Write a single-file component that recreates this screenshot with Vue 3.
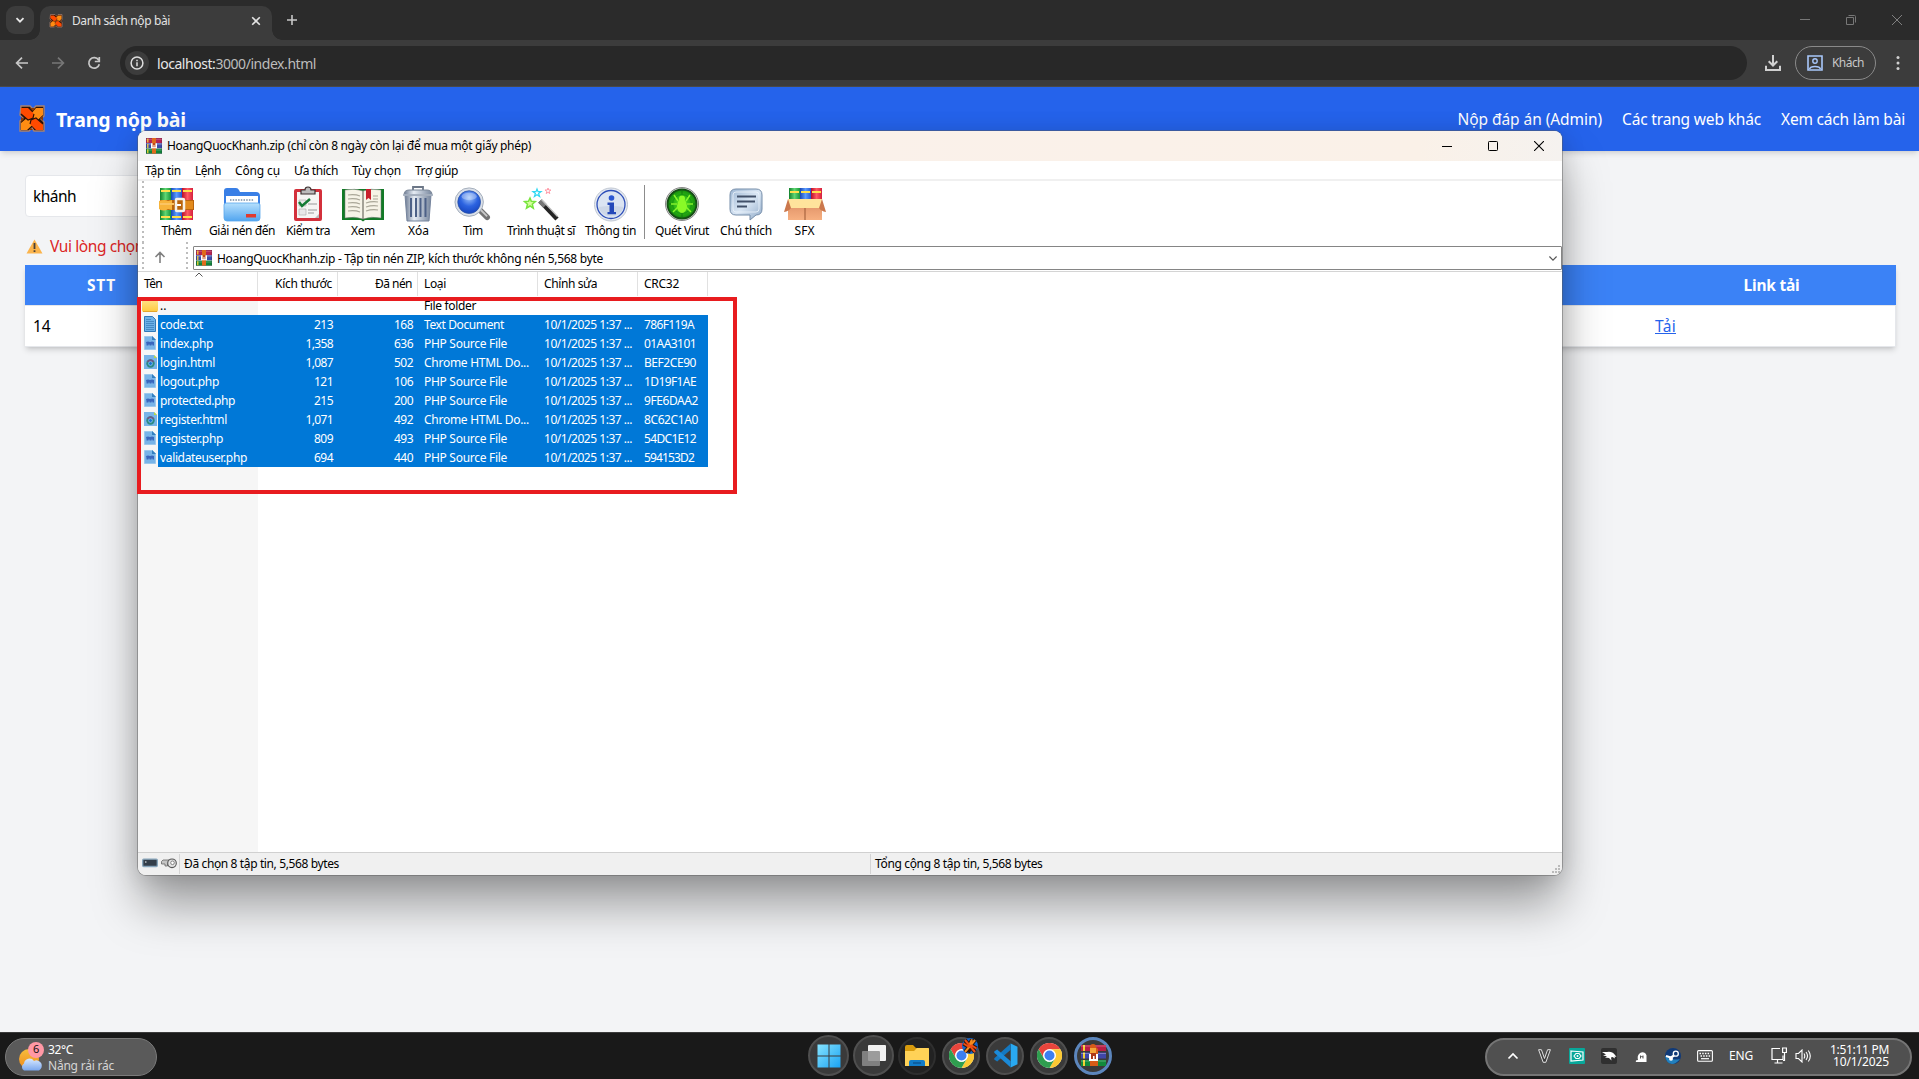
<script setup>
// Adjusts tracking so that a label occupies the given width in pixels.
const vFit = {
  mounted(el, { value }) {
    if (!value) return
    const natural = el.getBoundingClientRect().width
    el.style.letterSpacing = `${(value - natural) / [...el.textContent].length}px`
  }
}

const links = [
  { label: 'Nộp đáp án (Admin)', w: 144.5 },
  { label: 'Các trang web khác', w: 139 },
  { label: 'Xem cách làm bài', w: 124 }
]

const menus = [
  { label: 'Tập tin', w: 36 },
  { label: 'Lệnh', w: 26 },
  { label: 'Công cụ', w: 45 },
  { label: 'Ưa thích', w: 44 },
  { label: 'Tùy chọn', w: 49 },
  { label: 'Trợ giúp', w: 43 }
]

const tools = [
  { icon: 'add', label: 'Thêm', w: 30 },
  { icon: 'extract', label: 'Giải nén đến', w: 66 },
  { icon: 'test', label: 'Kiểm tra', w: 44 },
  { icon: 'view', label: 'Xem', w: 24 },
  { icon: 'delete', label: 'Xóa', w: 21 },
  { icon: 'find', label: 'Tìm', w: 20 },
  { icon: 'wizard', label: 'Trình thuật sĩ', w: 68 },
  { icon: 'info', label: 'Thông tin', w: 51 },
  { icon: 'sep' },
  { icon: 'virus', label: 'Quét Virut', w: 54 },
  { icon: 'comment', label: 'Chú thích', w: 52 },
  { icon: 'sfx', label: 'SFX', w: 20 }
]

const date = '10/1/2025 1:37 ...'
const files = [
  { name: 'code.txt', nw: 43, size: '213', packed: '168', type: 'Text Document', tw: 80, crc: '786F119A', cw: 50, icon: 'txt' },
  { name: 'index.php', nw: 53, size: '1,358', packed: '636', type: 'PHP Source File', tw: 83, crc: '01AA3101', cw: 52, icon: 'php' },
  { name: 'login.html', nw: 55, size: '1,087', packed: '502', type: 'Chrome HTML Do...', tw: 105, crc: 'BEF2CE90', cw: 52, icon: 'html' },
  { name: 'logout.php', nw: 59, size: '121', packed: '106', type: 'PHP Source File', tw: 83, crc: '1D19F1AE', cw: 52, icon: 'php' },
  { name: 'protected.php', nw: 75, size: '215', packed: '200', type: 'PHP Source File', tw: 83, crc: '9FE6DAA2', cw: 54, icon: 'php' },
  { name: 'register.html', nw: 67, size: '1,071', packed: '492', type: 'Chrome HTML Do...', tw: 105, crc: '8C62C1A0', cw: 54, icon: 'html' },
  { name: 'register.php', nw: 63, size: '809', packed: '493', type: 'PHP Source File', tw: 83, crc: '54DC1E12', cw: 52, icon: 'php' },
  { name: 'validateuser.php', nw: 87, size: '694', packed: '440', type: 'PHP Source File', tw: 83, crc: '594153D2', cw: 50, icon: 'php' }
]
const numberWidth = (s) => (s.length > 3 ? 27.5 : 19)
</script>

<template>
  <svg class="defs" aria-hidden="true">
    <defs>
      <linearGradient id="gRed" x1="0" x2="1"><stop offset="0" stop-color="#b80d28" /><stop offset=".5" stop-color="#ff5a63" /><stop offset="1" stop-color="#d5203c" /></linearGradient>
      <linearGradient id="gBlue" x1="0" x2="1"><stop offset="0" stop-color="#1746b4" /><stop offset=".5" stop-color="#5b9bff" /><stop offset="1" stop-color="#2457cf" /></linearGradient>
      <linearGradient id="gGreen" x1="0" x2="1"><stop offset="0" stop-color="#12812c" /><stop offset=".5" stop-color="#5fd673" /><stop offset="1" stop-color="#17963a" /></linearGradient>
      <linearGradient id="gFolder" x1="0" y1="0" x2="0" y2="1"><stop offset="0" stop-color="#b6e0fd" /><stop offset="1" stop-color="#52a5ef" /></linearGradient>
      <linearGradient id="gMetal" x1="0" x2="1"><stop offset="0" stop-color="#6c7a92" /><stop offset=".35" stop-color="#e6ecf4" /><stop offset="1" stop-color="#77869d" /></linearGradient>
      <radialGradient id="gLens" cx=".5" cy=".3" r=".7"><stop offset="0" stop-color="#9fc5fb" /><stop offset=".55" stop-color="#2c63e0" /><stop offset="1" stop-color="#1746c0" /></radialGradient>
      <radialGradient id="gVirus"><stop offset="0" stop-color="#58f025" /><stop offset="1" stop-color="#118b0b" /></radialGradient>
      <linearGradient id="gChat" x1="0" y1="0" x2="1" y2="1"><stop offset="0" stop-color="#9fb8d4" /><stop offset=".5" stop-color="#d9e6f4" /><stop offset="1" stop-color="#8fa9c7" /></linearGradient>
      <linearGradient id="gBox" x1="0" y1="0" x2="0" y2="1"><stop offset="0" stop-color="#d98a60" /><stop offset="1" stop-color="#f7b081" /></linearGradient>
      <linearGradient id="gYellow" x1="0" y1="0" x2="0" y2="1"><stop offset="0" stop-color="#ffe694" /><stop offset="1" stop-color="#ffc93c" /></linearGradient>
      <linearGradient id="gWin" x1="0" y1="0" x2="1" y2="1"><stop offset="0" stop-color="#86e4ff" /><stop offset="1" stop-color="#1aa2f2" /></linearGradient>
      <linearGradient id="gCloud" x1="0" y1="0" x2="0" y2="1"><stop offset="0" stop-color="#d8e9ff" /><stop offset="1" stop-color="#7aa7ee" /></linearGradient>
      <linearGradient id="gSun" x1="0" y1="0" x2="0" y2="1"><stop offset="0" stop-color="#f7bd3c" /><stop offset="1" stop-color="#f08b1d" /></linearGradient>
    </defs>
    <symbol id="knot" viewBox="0 0 28 28">
      <path d="M3 1h9l3 3 3-3h8v10l-3 3 3 3v9H16l-2-3-3 3H2V16l3-3-3-3z" fill="#2a1208" stroke="#a98272" stroke-width="1.400" />
      <path d="M18 3h7v7L9 25H3v-7l6-5 4-4z" fill="#ff8c12" />
      <path d="M3 3h7l6 6-1 4-5 2-7-6z" fill="#ff4a00" />
      <path d="M13 15l5-2 7 6v6h-7l-6-6z" fill="#ff4a00" />
      <path d="M3 9l7 6 5-2 1-4M12 19l1-4 5-2 7 6" fill="none" stroke="#2a1208" stroke-width="1.100" />
      <path d="M12 3l3 3 2-3zM3 12l3 2-3 3zM25 11v5l-3-3zM11 25h4l-2-2z" fill="#8a3808" />
    </symbol>
    <symbol id="rar" viewBox="0 0 16 16">
      <path d="M0 0h16v5H0z" fill="#b52452" /><path d="M0 5.300h16v5H0z" fill="#3b4aa8" /><path d="M0 10.600h16v5H0z" fill="#0f8438" />
      <path d="M0 1.200h16M1 6.600h15M1 12h15" stroke="#fff" stroke-opacity=".25" />
      <path d="M1.800 .500v4M1.800 6v4M1.800 11.300v4" stroke="#ffd735" stroke-width="1.200" />
      <path d="M0 0h16v15.600H0z" fill="none" stroke="#261b3a" stroke-opacity=".55" stroke-width=".6" />
      <path d="M6 0h4v15.600H6z" fill="#e06b1c" /><path d="M5 5.300h6v5H5z" fill="#fff" /><path d="M6.600 5h2.800v4.200H6.600z" fill="#c44b16" /><path d="M7.500 7h1v3h-1z" fill="#f5f5f5" />
    </symbol>
    <symbol id="chrome" viewBox="0 0 24 24">
      <circle cx="12" cy="12" r="12" fill="#fff" />
      <path d="M1.600 6A12 12 0 0 1 22.400 6H12a6 6 0 0 0-5.200 9z" fill="#e8453c" />
      <path d="M22.400 6A12 12 0 0 1 12 24l5.200-9A6 6 0 0 0 12 6z" fill="#fcc934" />
      <path d="M12 24A12 12 0 0 1 1.600 6l5.200 9a6 6 0 0 0 10.400 0z" fill="#2f9e4f" />
      <circle cx="12" cy="12" r="6" fill="#fff" /><circle cx="12" cy="12" r="4.800" fill="#3d7ff0" />
    </symbol>
  </svg>

  <div class="screen">
    <div class="tabstrip">
      <div class="tabsearch">
        <svg width="10" height="10" viewBox="0 0 10 10"><path d="M1.500 3.200 5 6.700l3.500-3.500" fill="none" stroke="#e8e8e8" stroke-width="1.800" /></svg>
      </div>
      <div class="tab">
        <svg width="14" height="14"><use href="#knot" /></svg>
        <span class="tabtitle"><span v-fit="98" class="t">Danh sách nộp bài</span></span>
        <svg width="10" height="10" viewBox="0 0 10 10"><path d="M1.200 1.200l7.600 7.600M8.800 1.200 1.200 8.800" stroke="#e3e3e3" stroke-width="1.600" /></svg>
      </div>
      <svg class="plus" width="12" height="12" viewBox="0 0 12 12"><path d="M6 1v10M1 6h10" stroke="#c7c7c7" stroke-width="1.600" /></svg>
      <div class="caption dim">
        <svg width="10" height="10" viewBox="0 0 10 10"><path d="M0 4.500h10" stroke="#777" /></svg>
        <svg width="10" height="10" viewBox="0 0 10 10"><path d="M.5 2.500h7v7h-7zM2.500 .500h6a1 1 0 0 1 1 1v6" fill="none" stroke="#777" /></svg>
        <svg width="10" height="10" viewBox="0 0 10 10"><path d="M0 0l10 10M10 0 0 10" stroke="#808080" /></svg>
      </div>
    </div>

    <div class="toolbar">
      <svg class="navico" width="14" height="14" viewBox="0 0 14 14"><path d="M13 7H2M7 1.600 1.600 7 7 12.400" fill="none" stroke="#c7c7c7" stroke-width="1.700" /></svg>
      <svg class="navico" width="14" height="14" viewBox="0 0 14 14"><path d="M1 7h11M7 1.600 12.400 7 7 12.400" fill="none" stroke="#777" stroke-width="1.700" /></svg>
      <svg class="navico" width="14" height="14" viewBox="0 0 14 14"><path d="M11.600 4A5.300 5.300 0 1 0 12.300 8.200M12.300 1v4.500H7.800" fill="none" stroke="#c7c7c7" stroke-width="1.700" /></svg>
      <div class="address">
        <div class="siteinfo"><svg width="14" height="14" viewBox="0 0 14 14"><circle cx="7" cy="7" r="5.900" fill="none" stroke="#dedede" stroke-width="1.500" /><path d="M7 6.200v4M7 3.700v1.500" stroke="#dedede" stroke-width="1.500" /></svg></div>
        <span v-fit="159" class="t url">localhost:<i>3000/index.html</i></span>
      </div>
      <svg class="download" width="16" height="16" viewBox="0 0 16 16"><path d="M8 0v10M3.700 6.200 8 10.500l4.300-4.300M1 10.800V15h14v-4.200" fill="none" stroke="#d0d0d0" stroke-width="2" /></svg>
      <div class="guest">
        <svg width="16" height="16" viewBox="0 0 16 16"><path d="M1 1h14v14H1z" fill="none" stroke="#a8c7fa" stroke-width="1.600" /><circle cx="8" cy="6" r="2.200" fill="none" stroke="#a8c7fa" stroke-width="1.400" /><path d="M2.500 14c1-3.500 10-3.500 11 0" fill="none" stroke="#a8c7fa" stroke-width="1.500" /></svg>
        <span v-fit="32" class="t">Khách</span>
      </div>
      <svg class="dots" width="4" height="14" viewBox="0 0 4 14"><g fill="#d0d0d0"><circle cx="2" cy="1.600" r="1.500" /><circle cx="2" cy="7" r="1.500" /><circle cx="2" cy="12.400" r="1.500" /></g></svg>
    </div>

    <header class="site">
      <svg width="28" height="28"><use href="#knot" /></svg>
      <h1><span v-fit="130" class="t">Trang nộp bài</span></h1>
      <nav><a v-for="l in links" :key="l.label"><span v-fit="l.w" class="t">{{ l.label }}</span></a></nav>
    </header>

    <main class="content">
      <div class="field"><span v-fit="43" class="t">khánh</span></div>
      <div class="warn">
        <svg width="17" height="15" viewBox="0 0 17 15"><path d="M8.500 .500 16.500 14.500H.5z" fill="#fbb44c" /><path d="M7.600 4h1.800v6H7.600zM7.600 11.300h1.800v1.700H7.600z" fill="#4a4038" /></svg>
        <span v-fit="94" class="t">Vui lòng chọn</span>
      </div>
      <div class="table">
        <div class="thead"><div class="c1"><span v-fit="29" class="t">STT</span></div><div class="c2"></div><div class="c3"><span v-fit="56" class="t">Link tải</span></div></div>
        <div class="trow"><div class="c1"><span class="t">14</span></div><div class="c2"></div><div class="c3"><a v-fit="21" class="t">Tải</a></div></div>
      </div>
    </main>

    <footer class="taskbar">
      <div class="weather">
        <svg width="26" height="30" viewBox="0 0 26 30"><circle cx="11" cy="17" r="10" fill="url(#gSun)" /><path d="M6 28.500a4 4 0 0 1 0-7 5.500 5.500 0 0 1 10-2.500 4.800 4.800 0 0 1 5 9.500z" fill="url(#gCloud)" /><circle cx="18" cy="8" r="8" fill="#ff98a5" /></svg>
        <span class="badge">6</span>
        <div class="wtext"><span v-fit="25" class="t">32°C</span><span v-fit="66" class="t desc">Nắng rải rác</span></div>
      </div>

      <div class="apps">
        <div class="app big"><svg width="24" height="24" viewBox="0 0 24 24"><path d="M.500 .500h11v11h-11zM12.500 .500h11v11h-11zM.500 12.500h11v11h-11zM12.500 12.500h11v11h-11z" fill="url(#gWin)" /></svg></div>
        <div class="app big"><svg width="26" height="22" viewBox="0 0 26 22"><rect x="7" y="0" width="18" height="16" rx="1" fill="#f1f1f1" /><rect x="1" y="6" width="18" height="15" rx="1" fill="#8d8d8d" fill-opacity=".85" /></svg></div>
        <div class="app faint"><svg width="26" height="24" viewBox="0 0 26 24"><path d="M1 3q0-2 2-2h6l3 3h12q1 0 1 1v6H1z" fill="#d89b0d" /><path d="M1 7h9l3-3h11q1 0 1 1v17H1z" fill="#ffd257" /><path d="M5 22v-4q0-2 2-2h12q2 0 2 2v4z" fill="#127cc8" /><path d="M9 19h8" stroke="#0b4f8a" stroke-width="1.300" /></svg></div>
        <div class="app"><svg width="25" height="25"><use href="#chrome" /></svg><svg class="mark" width="16" height="16" viewBox="0 0 16 16"><circle cx="8" cy="8" r="8" fill="#1565c9" /><path d="M3 2l10 12M1.500 5.500 7 9M14.500 10.500 9 7" stroke="#32170c" stroke-width="4" /><path d="M13 2 3 14M10 1.500 7 8M6 14.500 9 8" stroke="#32170c" stroke-width="4" /><path d="M13 2 3 14M10 1.500 7 8" stroke="#f38a20" stroke-width="2" /><path d="M3 2l10 12M1.500 5.500 7 9M14.500 10.500 9 7" stroke="#f04c12" stroke-width="2" /></svg></div>
        <div class="app"><svg width="25" height="25" viewBox="0 0 24 24"><path d="M17 .500 23.500 3.500v17L17 23.500z" fill="#29a9f1" /><path d="M17 .500v6L4 17.700 1.500 16q-1-.8 0-1.700z" fill="#1478c0" /><path d="M17 23.500v-6L4 6.300 1.500 8q-1 .8 0 1.700z" fill="#1b8ad8" /></svg></div>
        <div class="app"><svg width="25" height="25"><use href="#chrome" /></svg></div>
        <div class="app active"><svg width="25" height="23" viewBox="0 0 25 23"><path d="M0 1h25v6H0z" fill="#b91e45" /><path d="M0 8.500h25v6H0z" fill="#4046a8" /><path d="M0 16h25v6H0z" fill="#128a3b" /><path d="M3 1v6M3 8.500v6M3 16v6" stroke="#f4cf33" stroke-width="2" /><path d="M0 2h25M0 9.500h25M0 17h25" stroke="#fff" stroke-opacity=".3" /><path d="M9 3q0-3 3-3t3 3l2 2v17H9z" fill="#d75c17" /><path d="M9 4h6v5H9z" fill="#f4a53a" /><path d="M8 10h9v7H8z" fill="#fff" /><path d="M10 9h5v6h-5z" fill="#ad3817" /><path d="M12 12h1.500v4H12z" fill="#fff" /></svg></div>
      </div>

      <div class="tray">
        <svg width="12" height="8" viewBox="0 0 12 8"><path d="M1.500 6.500 6 2l4.500 4.500" fill="none" stroke="#fff" stroke-width="1.700" /></svg>
        <svg width="13" height="14" viewBox="0 0 13 14"><path d="M.6.700h2.800L6.500 9.500 9.600.700h2.800L7.800 13.300H5.200z" fill="#3d3d3d" stroke="#e2e2e2" stroke-width="1" /></svg>
        <svg width="16" height="16" viewBox="0 0 16 16"><rect width="16" height="16" rx="1" fill="#08a79a" /><path d="M2 3l12 1v8L2 13z" fill="none" stroke="#fff" stroke-width="1.200" /><path d="M5 8l2-2.500h3L12 8l-2 2.500H7z" fill="none" stroke="#fff" stroke-width="1.200" /><circle cx="8.500" cy="8" r="1" fill="#fff" /></svg>
        <svg width="16" height="16" viewBox="0 0 16 16"><rect width="16" height="16" rx="2" fill="#303030" /><path d="M1 4h5q5-1 8 3l1.500 2-2-.5.500 2-2.500-1.500-1.500.5.500 3L8 10 4 9.500 6 8.300 2 7.500l3-1z" fill="#fff" /></svg>
        <svg width="16" height="16" viewBox="0 0 16 16"><path d="M5 12Q4 8 6 6q2-2.500 5-1.500Q14 6 13.500 9v5H3q-1-2 2-2z" fill="#fff" /><path d="M7.500 7.500v3M10 7.500v3M7.500 9q1.300-1 2.500 0" fill="none" stroke="#555" /></svg>
        <svg width="16" height="16" viewBox="0 0 16 16"><circle cx="8" cy="8" r="8" fill="#103a78" /><path d="M0 8q6 5 15 3-4 5-8 5-6-1-7-8z" fill="#2280bd" /><circle cx="10.800" cy="5.700" r="2.500" fill="none" stroke="#fff" stroke-width="1.300" /><path d="M1 8l5 1.500L9 7.500" stroke="#fff" stroke-width="2.200" fill="none" /><circle cx="6" cy="10.700" r="2" fill="#fff" /></svg>
        <svg width="16" height="12" viewBox="0 0 16 12"><rect x=".6" y=".6" width="14.800" height="10.600" rx="1" fill="none" stroke="#fff" stroke-width="1.100" /><path d="M2.500 3.500h11M3.500 6h10" stroke="#fff" stroke-width="1.300" stroke-dasharray="1.500 1.200" /><path d="M4 8.700h8" stroke="#fff" stroke-width="1.200" /></svg>
        <span v-fit="24" class="t lang">ENG</span>
        <svg width="17" height="17" viewBox="0 0 17 17"><path d="M9 1.500H1v11h11V8.500M6.500 12.500v3M3.500 16h8" fill="none" stroke="#fff" stroke-width="1.200" /><path d="M11.600 1h3.800v4.500h-3.800zM13.500 5.500v8H12" fill="none" stroke="#fff" stroke-width="1.200" /></svg>
        <svg width="17" height="14" viewBox="0 0 17 14"><path d="M1 4.500h2.500L7 1v12L3.500 9.500H1z" fill="none" stroke="#fff" stroke-width="1.100" /><path d="M9 4.500q1.500 2.500 0 5M11 3q3 4 0 8M13.300 1.500q4 5.500 0 11" fill="none" stroke="#fff" stroke-width="1.100" /></svg>
        <div class="clock"><span v-fit="59" class="t">1:51:11 PM</span><span v-fit="56" class="t">10/1/2025</span></div>
      </div>
    </footer>

    <section class="window">
      <div class="titlebar">
        <svg width="16" height="16"><use href="#rar" /></svg>
        <span v-fit="364" class="t">HoangQuocKhanh.zip (chỉ còn 8 ngày còn lại để mua một giấy phép)</span>
        <div class="caption">
          <svg width="10" height="10" viewBox="0 0 10 10"><path d="M0 5.500h10" stroke="#000" /></svg>
          <svg width="10" height="10" viewBox="0 0 10 10"><rect x=".5" y=".5" width="9" height="9" rx=".8" fill="none" stroke="#000" /></svg>
          <svg width="10" height="10" viewBox="0 0 10 10"><path d="M0 0l10 10M10 0 0 10" stroke="#000" stroke-width="1.100" /></svg>
        </div>
      </div>
      <div class="menubar"><span v-for="m in menus" :key="m.label" v-fit="m.w" class="t">{{ m.label }}</span></div>

      <div class="tools">
        <div class="grip"></div>
        <div v-for="t in tools" :key="t.icon" :class="['tool', t.icon]">
          <svg v-if="t.icon === 'add'" width="35" height="36" viewBox="0 0 35 36"><path d="M1 2h11v32H1z" fill="url(#gGreen)" /><path d="M12 2h11v32H12z" fill="url(#gBlue)" /><path d="M23 2h11v32H23z" fill="url(#gRed)" /><path d="M2 5h9M13 5h9M24 5h9M2 31h9M13 31h9M24 31h9" stroke="#ffe04b" stroke-width="1.800" /><path d="M1 14h34v10H1z" fill="#b9640c" /><path d="M26 15h8v8h-8z" fill="#e28a1c" /><path d="M0 15q6-2 9 0l4-1v10l-4-1q-4 3-9 0z" fill="#f7b43b" /><path d="M1 18h14" stroke="#fbc463" stroke-width="2" /><rect x="17" y="13" width="8" height="12" rx="1" fill="none" stroke="#f5f1e8" stroke-width="2.500" /><path d="M18 19h4" stroke="#fff" stroke-width="2" /></svg>
          <svg v-else-if="t.icon === 'extract'" width="38" height="36" viewBox="0 0 38 36"><path d="M1 5q0-3 3-3h9q2 0 3 2l1 2h16q4 0 4 4v20H1z" fill="#397fe6" /><path d="M3 10h32v10H3z" fill="#fff" /><path d="M7 14h24" stroke="#9aaabc" stroke-width="2" stroke-dasharray="1.500 1.200" /><path d="M1 19q0-2 2-2h32q2 0 2 2v13q0 3-3 3H4q-3 0-3-3z" fill="url(#gFolder)" stroke="#5aa7ec" stroke-width=".8" /><path d="M23 28h10v3.500H23z" fill="#e03a2f" /></svg>
          <svg v-else-if="t.icon === 'test'" width="30" height="36" viewBox="0 0 30 36"><rect x="1" y="3" width="28" height="32" rx="2" fill="#d3303b" /><path d="M4 6h22v26H4z" fill="#f5f5f3" /><path d="M22 32l4-4v4z" fill="#bbb" /><path d="M8 8V4h4q0-3 3-3t3 3h4v4z" fill="#bbb" stroke="#3c3030" stroke-width="1.200" /><path d="M6 14h7v6H6zM6 23h7v6H6z" fill="#e8e8e8" stroke="#aaa" stroke-width=".6" /><path d="M6 16l3 4 8-7" fill="none" stroke="#147c35" stroke-width="2.500" /><path d="M15 18h9M15 24h9M15 27h6" stroke="#999" /></svg>
          <svg v-else-if="t.icon === 'view'" width="42" height="36" viewBox="0 0 42 36"><path d="M0 3h42v31H23l-2 1.500L19 34H0z" fill="#127a26" /><path d="M3 4q10-2 18 1v28q-8-3-18-1zM39 4q-10-2-18 1v28q8-3 18-1z" fill="#f6f3e7" stroke="#777" stroke-width=".5" /><path d="M6 9q7-1 12 1M6 13q7-1 12 1M6 17q7-1 12 1M6 21q7-1 12 1M6 25q7-1 12 1M24 17q6-2 12-1M24 21q6-2 12-1M24 25q6-2 12-1M31 10h5M31 13h5" fill="none" stroke="#aaa798" stroke-width="1.200" /><path d="M21 5v28" stroke="#8b8878" /><path d="M24 3h5v11l-2.500-2L24 14z" fill="#c8202d" /></svg>
          <svg v-else-if="t.icon === 'delete'" width="32" height="36" viewBox="0 0 32 36"><path d="M3 9h26l-2 26H5z" fill="url(#gMetal)" stroke="#75849d" /><path d="M9 12v19M14 12v19M18.500 12v19M23.500 12v19" stroke="#4d6187" stroke-width="2" /><path d="M11 4V1h10v3" fill="none" stroke="#6c7787" stroke-width="1.800" /><path d="M2 9q0-5 5-5h18q5 0 5 5z" fill="url(#gMetal)" stroke="#7b8798" /><path d="M1 9h30" stroke="#a7b1c0" stroke-width="1.800" /></svg>
          <svg v-else-if="t.icon === 'find'" width="38" height="38" viewBox="0 0 38 38"><path d="M26 24l9 9" stroke="#747474" stroke-width="6" stroke-linecap="round" /><path d="M26 23l9 9" stroke="#c9c9c9" stroke-width="2" /><circle cx="16" cy="17" r="15" fill="#dbe0e8" stroke="#a1abb9" /><circle cx="16" cy="17" r="12" fill="url(#gLens)" stroke="#2852a8" stroke-width=".8" /><ellipse cx="16" cy="11" rx="8" ry="4" fill="#fff" fill-opacity=".3" /></svg>
          <svg v-else-if="t.icon === 'wizard'" width="38" height="36" viewBox="0 0 38 36"><path d="M18 15l17 18" stroke="#252525" stroke-width="4.500" /><path d="M18 15l5 5" stroke="#777" stroke-width="5" /><path d="M19.500 13.500l16 17" stroke="#c4c4c4" stroke-width="1.200" /><g fill="none" stroke-width="1.500"><path d="M8 12l1.300 3.200 4 .4-3 2.600 1 4L8 20l-3.500 2.200 1-4-3-2.600 4-.4z" stroke="#78e43e" fill="#d5ff9b" /><path d="M15 3l1 2.700h3l-2.400 1.800 1 3-2.600-1.700-2.600 1.700 1-3L11 5.700h3z" stroke="#30d8f2" stroke-width="1.200" /><path d="M26 2l.7 2h2.300l-1.900 1.400.7 2.200L26 6.300l-1.800 1.300.7-2.200L23 4h2.300z" stroke="#ff9aa8" stroke-width="1" /></g></svg>
          <svg v-else-if="t.icon === 'info'" width="36" height="36" viewBox="0 0 36 36"><circle cx="18" cy="18.500" r="16.500" fill="#e5eaf2" stroke="#c0c7d2" /><circle cx="18" cy="18.500" r="14" fill="#dbe4f2" stroke="#2d4eb8" stroke-width="1.300" /><path d="M5.500 21q12-2 25 0a13 13 0 0 1-25 0z" fill="#b9c4d6" fill-opacity=".4" /><circle cx="18.500" cy="12" r="2.800" fill="#2b57d2" /><path d="M14.500 16.500H21V26h2v2.200h-8.500V26h2v-7h-2z" fill="#2448b9" /></svg>
          <svg v-else-if="t.icon === 'virus'" width="36" height="36" viewBox="0 0 36 36"><circle cx="18" cy="18" r="16.500" fill="#ddd" stroke="#888" /><circle cx="18" cy="18" r="14.500" fill="url(#gVirus)" stroke="#164d16" stroke-width="1.800" /><path d="M18 3v30M3 18h30" stroke="#126e10" stroke-width=".8" /><circle cx="18" cy="18" r="9.500" fill="none" stroke="#159611" /><path d="M10 9l4 6M26 9l-4 6M7 18h6M23 18h6M9 26l5-5M27 26l-5-5" stroke="#87f72c" stroke-width="1.500" /><ellipse cx="18" cy="20" rx="5" ry="7" fill="#89fa27" /><circle cx="18" cy="12.500" r="3" fill="#89fa27" /></svg>
          <svg v-else-if="t.icon === 'comment'" width="34" height="36" viewBox="0 0 34 36"><path d="M7 3h20q6 0 6 6v14q0 6-6 6l-6 5v-5H7q-6 0-6-6V9q0-6 6-6z" fill="url(#gChat)" stroke="#758da9" /><path d="M4 9q0-3 3-3h20q3 0 3 3v14q0 3-3 3H7q-3 0-3-3z" fill="none" stroke="#eef5fc" stroke-width=".8" /><path d="M8 10.500h19M8 15.500h18M8 20.500h10" stroke="#415069" stroke-width="1.800" /></svg>
          <svg v-else-if="t.icon === 'sfx'" width="42" height="36" viewBox="0 0 42 36"><path d="M5 2h11v13H5z" fill="url(#gGreen)" /><path d="M16 2h11v13H16z" fill="url(#gBlue)" /><path d="M27 2h11v13H27z" fill="url(#gRed)" /><path d="M6 6h9M17 6h9M28 6h9" stroke="#ffe04b" stroke-width="1.800" /><path d="M4 13h34v21H4z" fill="url(#gBox)" /><path d="M4 13h34v9H4z" fill="#ffe49c" /><path d="M4 13l3 9q-2 3-7 4zM38 13l-3 9q2 3 7 4z" fill="#cb784d" /><path d="M21 22v12" stroke="#9b5835" /></svg>
          <span v-if="t.label" v-fit="t.w" class="t">{{ t.label }}</span>
        </div>
      </div>

      <div class="pathrow">
        <div class="grip"></div>
        <svg class="up" width="12" height="12" viewBox="0 0 12 12"><path d="M6 12V1.500M1.500 6 6 1.500 10.500 6" fill="none" stroke="#808080" stroke-width="1.600" /></svg>
        <div class="grip"></div>
        <div class="combo">
          <svg width="16" height="16"><use href="#rar" /></svg>
          <span v-fit="386" class="t">HoangQuocKhanh.zip - Tập tin nén ZIP, kích thước không nén 5,568 byte</span>
          <svg class="drop" width="8" height="5" viewBox="0 0 8 5"><path d="M.4.500 4 4.200 7.600.500" fill="none" stroke="#555" stroke-width="1.100" /></svg>
        </div>
      </div>

      <div class="cols">
        <div><span v-fit="18" class="t">Tên</span><svg class="sort" width="8" height="5" viewBox="0 0 8 5"><path d="M.5 4.500 4 1l3.500 3.500" fill="none" stroke="#555" /></svg></div>
        <div class="num"><span v-fit="57" class="t">Kích thước</span></div>
        <div class="num"><span v-fit="37" class="t">Đã nén</span></div>
        <div><span v-fit="22" class="t">Loại</span></div>
        <div><span v-fit="53" class="t">Chỉnh sửa</span></div>
        <div><span v-fit="35" class="t">CRC32</span></div>
      </div>

      <div class="list">
        <div class="row up-row">
          <div class="ic"><svg width="16" height="14" viewBox="0 0 16 14"><path d="M0 2q0-2 2-2h4l2 2h6q2 0 2 2v8q0 2-2 2H2q-2 0-2-2z" fill="url(#gYellow)" /><path d="M1 13.500h14" stroke="#e4a52a" /></svg></div>
          <div class="name"><span class="t">..</span></div><div class="num"></div><div class="num"></div><div><span v-fit="52" class="t">File folder</span></div><div></div><div></div>
        </div>
        <div v-for="f in files" :key="f.name" class="row sel">
          <div class="ic">
            <svg v-if="f.icon === 'txt'" width="12" height="16" viewBox="0 0 12 16"><path d="M.5.500h8l3 3v12H.5z" fill="#6cb1e8" stroke="#2f79b8" /><path d="M2 5.500h8M2 7.500h8M2 9.500h8M2 11.500h8M2 13.500h8M2 3.500h5" stroke="#3c80bb" stroke-width=".8" /></svg>
            <svg v-else-if="f.icon === 'php'" width="12" height="16" viewBox="0 0 12 16"><path d="M.5 1.500h8l3 3v10H.5z" fill="#78b4e8" stroke="#9cc8ec" /><path d="M8 1v4h4z" fill="#337fbf" /><path d="M2 7q2-1 4 0 2-1 4 0v3.500H8.500V9.500h-1v1H5.500V9.500h-1v1H2.500V9z" fill="#3966bd" /></svg>
            <svg v-else width="13" height="16" viewBox="0 0 13 16"><path d="M0 1h10l3 3v11H0z" fill="#78b4e8" /><path d="M10 1v3h3z" fill="#b4d94a" /><circle cx="6.500" cy="9.500" r="4.200" fill="#2c8a83" /><path d="M2.600 8a4.200 4.200 0 0 1 7.800 0z" fill="#6c5a88" /><circle cx="6.500" cy="9.500" r="1.900" fill="#1272d4" stroke="#90c4ee" stroke-width=".8" /></svg>
          </div>
          <div class="name"><span v-fit="f.nw" class="t">{{ f.name }}</span></div>
          <div class="num"><span v-fit="numberWidth(f.size)" class="t">{{ f.size }}</span></div>
          <div class="num"><span v-fit="19" class="t">{{ f.packed }}</span></div>
          <div><span v-fit="f.tw" class="t">{{ f.type }}</span></div>
          <div><span v-fit="88" class="t">{{ date }}</span></div>
          <div><span v-fit="f.cw" class="t">{{ f.crc }}</span></div>
        </div>
        <div class="highlight"></div>
      </div>

      <div class="status">
        <svg width="16" height="10" viewBox="0 0 16 10"><rect x=".7" y="1.200" width="14.600" height="7.300" rx="1" fill="#333d48" stroke="#86a4ba" stroke-width="1.300" /><path d="M3 4h1.500" stroke="#fff" /></svg>
        <svg width="16" height="11" viewBox="0 0 16 11"><path d="M.5 3.500 2 2h6v4H6.500v2H4V6H.5z" fill="#c4c4c4" stroke="#666" stroke-width=".8" /><circle cx="11" cy="5.300" r="4.300" fill="#e2e2e2" stroke="#555" stroke-width="1.100" /><circle cx="11.500" cy="4.800" r="1.800" fill="#fff" stroke="#777" stroke-width=".9" /></svg>
        <div class="s1"><span v-fit="155" class="t">Đã chọn 8 tập tin, 5,568 bytes</span></div>
        <div class="s2"><span v-fit="167.500" class="t">Tổng cộng 8 tập tin, 5,568 bytes</span></div>
        <svg class="size" width="8" height="8" viewBox="0 0 8 8"><path d="M6 0h2v2H6zM6 3h2v2H6zM3 3h2v2H3zM6 6h2v2H6zM3 6h2v2H3zM0 6h2v2H0z" fill="#bbb" /></svg>
      </div>
    </section>
  </div>
</template>

<style>
body { margin: 0; overflow: hidden; }
</style>

<style scoped>
.defs { position: absolute; width: 0; height: 0; }
.screen { position: relative; width: 1919px; height: 1079px; display: flex; flex-direction: column; overflow: hidden; background: #f3f4f6; font-family: "Noto Sans", "Open Sans", sans-serif; font-size: 12px; color: #000; }
.screen * { box-sizing: border-box; }
svg { display: block; flex: none; }
.t { display: inline-block; white-space: nowrap; }

.tabstrip { height: 40px; flex: none; background: #2b2b2b; display: flex; align-items: flex-start; }
.tabsearch { width: 28px; height: 28px; margin: 6px 6px 0; border-radius: 9px; background: #3c3c3c; display: flex; align-items: center; justify-content: center; }
.tab { position: relative; width: 232px; height: 34px; margin-top: 6px; border-radius: 10px 10px 0 0; background: #3c3c3c; display: flex; align-items: center; padding: 0 11px 5px 9px; color: #e3e3e3; }
.tab::before, .tab::after { content: ""; position: absolute; bottom: 0; width: 10px; height: 10px; }
.tab::before { left: -10px; background: radial-gradient(circle at 0 0, transparent 9.500px, #3c3c3c 10px); }
.tab::after { right: -10px; background: radial-gradient(circle at 100% 0, transparent 9.500px, #3c3c3c 10px); }
.tabtitle { flex: 1; padding-left: 9px; }
.plus { margin: 14px 0 0 14px; }
.caption { margin-left: auto; display: flex; gap: 36px; align-items: center; }
.dim { margin: 15px 17px 0 auto; }

.toolbar { height: 47px; flex: none; background: #3c3c3c; border-bottom: 1px solid #4a4a4a; display: flex; align-items: center; padding-left: 15px; }
.navico { margin-right: 22px; }
.address { width: 1627px; height: 34px; margin-left: -3px; border-radius: 17px; background: #282828; display: flex; align-items: center; padding-left: 5px; }
.siteinfo { width: 24px; height: 24px; border-radius: 50%; background: #3c3c3c; display: flex; align-items: center; justify-content: center; margin-right: 8px; }
.url { font-size: 14px; color: #e6e6e6; }
.url i { font-style: normal; color: #bcbcbc; }
.download { margin-left: 18px; }
.guest { width: 81px; height: 34px; margin-left: 14px; border: 1px solid #8a8a8a; border-radius: 17px; display: flex; align-items: center; gap: 9px; padding-left: 11px; color: #c7c7c7; }
.guest .t { margin-top: -2px; }
.dots { margin-left: 20px; }

.site { height: 64px; flex: none; background: #2563eb; box-shadow: 0 4px 6px -1px rgba(0,0,0,.1), 0 2px 4px -2px rgba(0,0,0,.1); display: flex; align-items: center; padding: 0 14px 0 18px; color: #fff; z-index: 1; }
.site h1 { margin: 2px 0 0 10px; font-size: 19.500px; line-height: 28px; font-weight: 700; }
.site nav { margin-left: auto; display: flex; gap: 20px; font-size: 15.500px; }

.content { flex: 1; padding: 24px 23px 0 25px; font-size: 15.500px; }
.field { width: 768px; height: 42px; border: 1px solid #e5e7eb; border-radius: 4px; background: #fff; padding: 0 7px; display: flex; align-items: center; }
.warn { height: 24px; margin: 17px 0 7px 1px; display: flex; align-items: center; gap: 7px; color: #dc2626; }
.warn .t { margin-top: -1px; }
.table { background: #fff; box-shadow: 0 4px 6px -1px rgba(0,0,0,.14), 0 2px 4px -2px rgba(0,0,0,.12); }
.thead, .trow { display: flex; align-items: center; }
.thead { height: 40px; background: #3b82f6; color: #fff; font-weight: 700; font-size: 15.500px; }
.trow { height: 42px; border: 1px solid #e5e7eb; border-width: 1px 1px 1px 0; }
.c1 { width: 153px; }
.thead .c1, .thead .c3 { text-align: center; }
.trow .c1 { padding-left: 8px; }
.c2 { flex: 1; }
.c3 { width: 249px; }
.trow .c3 { padding-left: 9px; color: #2563eb; }
.trow .c3 a { text-decoration: underline; }

.taskbar { position: relative; height: 47px; flex: none; background: #191919; border-top: 1px solid #3b3b3b; display: flex; align-items: center; justify-content: space-between; padding: 0 7px 0 5px; color: #fff; }
.weather { position: relative; width: 152px; height: 38px; margin-top: 1px; border: 1.500px solid #7b7b7b; border-radius: 19px; background: #5a5a5a; display: flex; align-items: center; padding-left: 12px; gap: 4px; }
.badge { position: absolute; left: 27px; top: 2px; color: #111; font-size: 11px; line-height: 16px; }
.wtext { display: flex; flex-direction: column; align-items: flex-start; line-height: 16px; padding-top: 2px; }
.desc { color: #d5d5d5; }
.apps { position: absolute; left: 808px; top: 2px; height: 41px; display: flex; align-items: center; gap: 6px; }
.app { position: relative; width: 38px; height: 38px; border-radius: 50%; border: 2px solid #4f4f4f; background: #3a3a3a; display: flex; align-items: center; justify-content: center; }
.big { width: 41px; height: 41px; margin-right: -2px; }
.faint { background: #222; border-color: #2e2e2e; }
.active { border: 3px solid #5c86bd; }
.mark { position: absolute; right: 0; top: -1px; }
.tray { width: 427px; height: 38px; margin-top: 1px; border: 2px solid #757575; border-radius: 19px; background: #505050; display: flex; align-items: center; padding: 0 21px 2px 20px; }
.tray svg:nth-child(1) { margin-right: 19px; }
.tray svg:nth-child(2) { margin-right: 18px; }
.tray svg:nth-child(n+3):nth-child(-n+7) { margin-right: 16px; }
.tray svg:nth-child(7) { margin-right: 20px; }
.lang { margin-right: 18px; }
.tray svg:nth-child(9) { margin-right: 7px; }
.clock { margin-left: auto; display: flex; flex-direction: column; align-items: flex-end; line-height: 12px; padding-top: 1px; }

.window { position: absolute; left: 138px; top: 131px; width: 1424px; height: 744px; z-index: 2; background: #fff; border-radius: 8px; box-shadow: 0 0 0 1px rgba(90,90,90,.45), 0 32px 48px -2px rgba(0,0,0,.36), 0 2px 24px rgba(0,0,0,.14); display: flex; flex-direction: column; }
.titlebar { height: 30px; flex: none; border-radius: 8px 8px 0 0; background: linear-gradient(90deg, #f3f3f3, #f3f2f0 15%, #faf1eb 30%, #faf1e8 90%, #f5f2ef); display: flex; align-items: center; padding: 0 18px 1px 8px; gap: 5px; }
.menubar { height: 20px; flex: none; border-bottom: 2px solid #f0f0f0; display: flex; align-items: center; gap: 14px; padding: 0 0 0 7px; }
.tools { height: 61px; flex: none; display: grid; grid-template-columns: 11px 55px 76px 56px 54px 57px 52px 84px 55px 13px 62px 66px 51px; }
.tool { display: flex; flex-direction: column; align-items: center; padding-top: 5px; }
.tool svg { height: 36px; }
.tool.delete svg, .tool.find svg { margin-left: -2px; }
.tool .t { line-height: 16px; margin-top: 1px; }
.sep::before { content: ""; width: 1px; height: 54px; background: #8c8c8c; margin-top: -1px; }
.grip { width: 2px; margin-left: 4px; background: repeating-linear-gradient(#bdbdbd 0 2px, transparent 2px 5px); }
.pathrow { height: 29px; flex: none; display: flex; }
.up { margin: 9px 0 0 10px; }
.pathrow .up + .grip { margin-left: 20px; }
.combo { flex: 1; height: 24px; margin: 4px 0 0 5px; border: 1px solid #858585; border-radius: 1px; display: flex; align-items: center; padding: 0 4px 0 2px; gap: 5px; }
.drop { margin-left: auto; }

.cols { height: 26px; flex: none; border-top: 1px solid #d4d4d4; display: grid; grid-template-columns: 120px 80px 80px 120px 100px 70px; }
.cols > div { position: relative; height: 24px; border-right: 1px solid #e1e1e1; padding: 0 5px 1px 6px; display: flex; align-items: center; }
.cols > .num { justify-content: flex-end; }
.sort { position: absolute; left: 57px; top: 0; }
.list { position: relative; flex: 1; background: linear-gradient(90deg, #f6f6f6 120px, #fff 120px); }
.row { height: 19px; display: grid; grid-template-columns: 20px 100px 80px 80px 120px 100px 70px; align-items: stretch; }
.row > div { padding: 0 5px 1px 6px; display: flex; align-items: center; line-height: 17px; white-space: nowrap; }
.row > .ic { padding: 0 0 1px 6px; }
.row > .name { padding-left: 2px; }
.row > .num { justify-content: flex-end; }
.row.up-row > .ic { padding-left: 4px; }
.up-row { margin-top: -1px; }
.sel { color: #fff; }
.sel > div:not(.ic) { background: #0078d7; }
.highlight { position: absolute; left: -1px; top: 0; width: 600px; height: 197px; border: 4px solid #e81c1f; }
.status { position: relative; height: 23px; flex: none; border-top: 1px solid #d0d0d0; border-radius: 0 0 8px 8px; background: #f0f0f0; display: flex; align-items: center; padding-left: 4px; }
.status > svg { margin-right: 3px; margin-top: -2px; }
.s1 { width: 691px; border-left: 1px solid #d4d4d4; padding: 0 0 0 4px; height: 20px; line-height: 20px; margin-left: -1px; }
.s2 { border-left: 1px solid #d4d4d4; padding: 0 0 0 4px; height: 20px; line-height: 20px; }
.status > .size { margin: 9px 2px 0 auto; }
</style>
